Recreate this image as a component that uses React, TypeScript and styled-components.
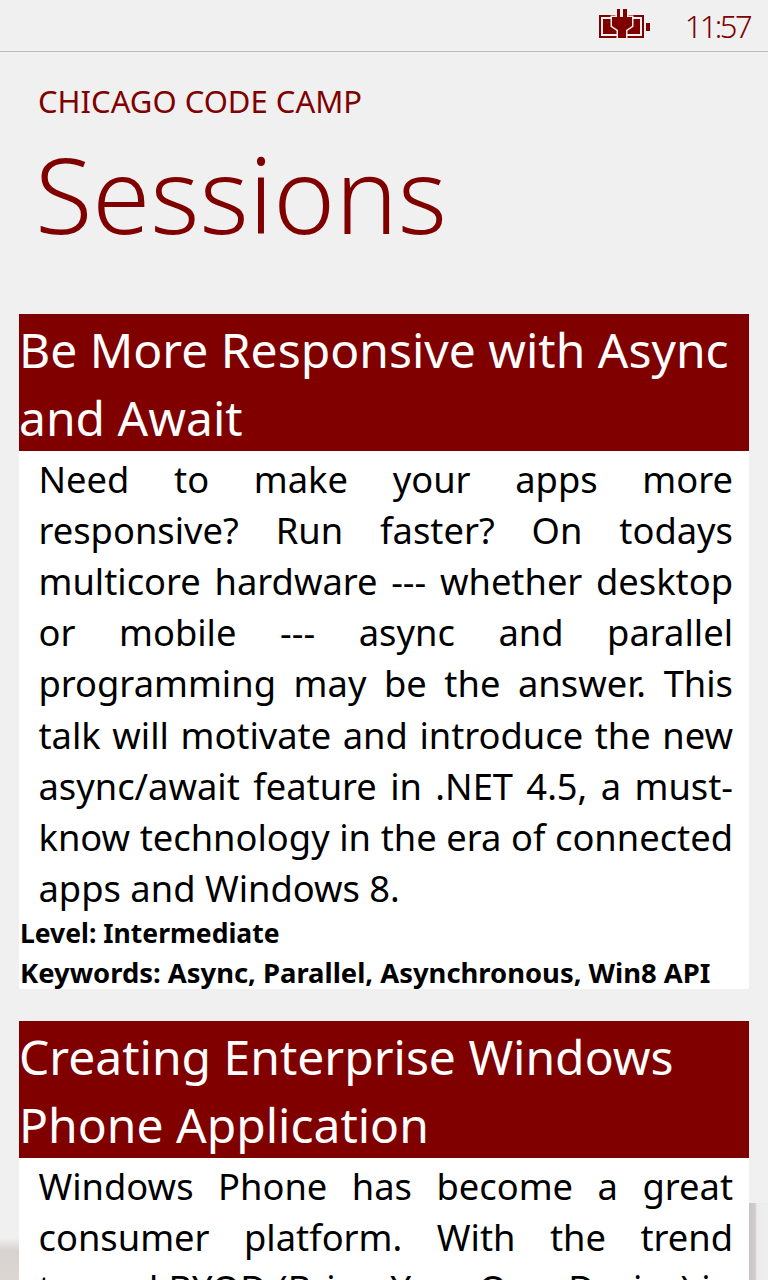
import styled, { createGlobalStyle } from 'styled-components'

const sessions = [
  {
    title: 'Be More Responsive with Async and Await',
    body: 'Need to make your apps more responsive? Run faster? On todays multicore hardware --- whether desktop or mobile --- async and parallel programming may be the answer. This talk will motivate and introduce the new async/await feature in .NET 4.5, a must-know technology in the era of connected apps and Windows 8.',
    level: 'Intermediate',
    keywords: 'Async, Parallel, Asynchronous, Win8 API',
  },
  {
    title: 'Creating Enterprise Windows Phone Application',
    body: 'Windows Phone has become a great consumer platform. With the trend toward BYOD (Bring Your Own Device) in the enterprise, it is time to look at how to build line of business apps for it.',
  },
]

const GlobalStyle = createGlobalStyle`
  html, body {
    margin: 0;
    padding: 0;
    height: 1280px;
    overflow: hidden;
    background: #f0f0f0;
    font-family: 'Noto Sans', 'Open Sans', sans-serif;
  }
`

const Page = styled.div`
  width: 768px;
  height: 1280px;
  overflow: hidden;
  background:
    linear-gradient(to bottom, #f0f0f0, #d8d2d0 30%, #dcd6d3) 0 1238px / 19px 42px no-repeat,
    linear-gradient(to right, #c9c5c5, #d0cccc 6px, #ececec 8px, #eeeeee) 749px 1203px / 19px 77px no-repeat,
    #f0f0f0;
`

const StatusBar = styled.div`
  height: 51px;
  border-bottom: 1px solid #bdbdbd;
  display: flex;
  align-items: center;
  justify-content: flex-end;
  gap: 35px;
  padding-right: 18px;
  color: #800000;
`

const Clock = styled.span`
  font-size: 31px;
  font-weight: 350;
  line-height: 48px;
  letter-spacing: -2.6px;
`

const Battery = styled.svg`
  flex: none;
  margin-top: -3px;
`

const Header = styled.header`
  padding: 29px 0 0 35px;
  height: 230px;
  box-sizing: border-box;
  color: #800000;
`

const AppName = styled.div`
  font-size: 31px;
  line-height: 40px;
  padding-left: 3px;
`

const PageTitle = styled.h1`
  margin: 0;
  font-size: 105px;
  font-weight: 350;
  line-height: 145px;
`

const List = styled.div`
  padding: 32px 19px 0;
  display: flex;
  flex-direction: column;
  gap: 32px;
`

const Card = styled.article`
  background: #fff;
`

const CardTitle = styled.h2`
  margin: 0;
  background: #800000;
  color: #fff;
  font-size: 48px;
  font-weight: 400;
  line-height: 68px;
  height: 137px;
  padding-top: 2px;
  box-sizing: border-box;
`

const Body = styled.p`
  margin: 0;
  padding: 3px 16px 0 19.5px;
  font-size: 36.3px;
  line-height: 51.11px;
  color: #000;
  text-align: justify;
  hyphens: manual;
`

const Meta = styled.div<{ $size: number }>`
  font-size: ${props => props.$size}px;
  font-weight: 700;
  line-height: 39px;
  color: #000;
  padding-left: 1px;
  &:last-child {
    height: 36px;
  }
`

const BatteryIcon = () => (
  <Battery width="51" height="30" viewBox="0 0 51 30" fill="#800000">
    <path fillRule="evenodd" d="M0 6h45v23H0zM2 8v19h41V8z" />
    <path d="M4 10h37v15H4z" />
    <rect x="47" y="14" width="4" height="8" />
    <path
      d="M13 8h5V0h3v8h3V0h4v8h5v9l-6 4v8h-8v-8l-6-4z"
      stroke="#f0f0f0"
      strokeWidth="3"
      paintOrder="stroke"
    />
  </Battery>
)

export default function App() {
  return (
    <Page>
      <GlobalStyle />
      <StatusBar>
        <BatteryIcon />
        <Clock>11:57</Clock>
      </StatusBar>
      <Header>
        <AppName>CHICAGO CODE CAMP</AppName>
        <PageTitle>Sessions</PageTitle>
      </Header>
      <List>
        {sessions.map(s => (
          <Card key={s.title}>
            <CardTitle>{s.title}</CardTitle>
            <Body>{s.body}</Body>
            {s.level && <Meta $size={26.5}>Level: {s.level}</Meta>}
            {s.keywords && <Meta $size={27.4}>Keywords: {s.keywords}</Meta>}
          </Card>
        ))}
      </List>
    </Page>
  )
}
